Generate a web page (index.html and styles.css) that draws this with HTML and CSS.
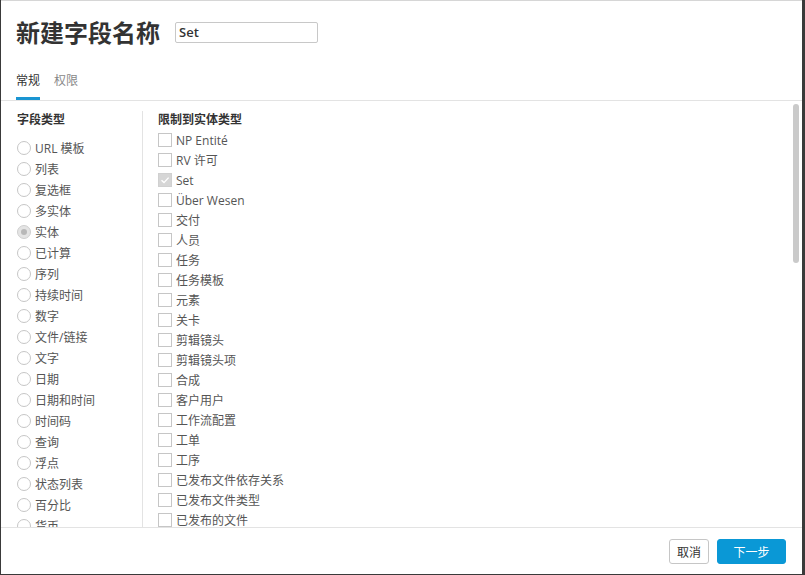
FILE: index.html
```html
<!DOCTYPE html>
<html lang="zh">
<head>
<meta charset="utf-8">
<link rel="stylesheet" href="styles.css">
</head>
<body>
<div class="dialog">
  <div class="header">
    <div class="title-row">
      <h1 class="title">新建字段名称</h1>
      <input class="name-input" type="text" value="Set">
    </div>
    <div class="tabs">
      <div class="tab active">常规</div>
      <div class="tab">权限</div>
    </div>
  </div>
  <div class="body">
    <div class="columns">
      <div class="col-left">
        <div class="heading heading-left">字段类型</div>
        <ul class="list radios">
          <li class="row"><span class="radio"></span>URL 模板</li>
          <li class="row"><span class="radio"></span>列表</li>
          <li class="row"><span class="radio"></span>复选框</li>
          <li class="row"><span class="radio"></span>多实体</li>
          <li class="row"><span class="radio checked"></span>实体</li>
          <li class="row"><span class="radio"></span>已计算</li>
          <li class="row"><span class="radio"></span>序列</li>
          <li class="row"><span class="radio"></span>持续时间</li>
          <li class="row"><span class="radio"></span>数字</li>
          <li class="row"><span class="radio"></span>文件/链接</li>
          <li class="row"><span class="radio"></span>文字</li>
          <li class="row"><span class="radio"></span>日期</li>
          <li class="row"><span class="radio"></span>日期和时间</li>
          <li class="row"><span class="radio"></span>时间码</li>
          <li class="row"><span class="radio"></span>查询</li>
          <li class="row"><span class="radio"></span>浮点</li>
          <li class="row"><span class="radio"></span>状态列表</li>
          <li class="row"><span class="radio"></span>百分比</li>
          <li class="row"><span class="radio"></span>货币</li>
        </ul>
      </div>
      <div class="col-right">
        <div class="heading heading-right">限制到实体类型</div>
        <ul class="list checks">
          <li class="crow"><span class="box"></span>NP Entité</li>
          <li class="crow"><span class="box"></span>RV 许可</li>
          <li class="crow"><span class="box checked"><svg viewBox="0 0 12 12" width="12" height="12"><path d="M2.5 6.2 L5 8.6 L9.6 3.6" fill="none" stroke="#fff" stroke-width="1.4"/></svg></span>Set</li>
          <li class="crow"><span class="box"></span>Über Wesen</li>
          <li class="crow"><span class="box"></span>交付</li>
          <li class="crow"><span class="box"></span>人员</li>
          <li class="crow"><span class="box"></span>任务</li>
          <li class="crow"><span class="box"></span>任务模板</li>
          <li class="crow"><span class="box"></span>元素</li>
          <li class="crow"><span class="box"></span>关卡</li>
          <li class="crow"><span class="box"></span>剪辑镜头</li>
          <li class="crow"><span class="box"></span>剪辑镜头项</li>
          <li class="crow"><span class="box"></span>合成</li>
          <li class="crow"><span class="box"></span>客户用户</li>
          <li class="crow"><span class="box"></span>工作流配置</li>
          <li class="crow"><span class="box"></span>工单</li>
          <li class="crow"><span class="box"></span>工序</li>
          <li class="crow"><span class="box"></span>已发布文件依存关系</li>
          <li class="crow"><span class="box"></span>已发布文件类型</li>
          <li class="crow"><span class="box"></span>已发布的文件</li>
        </ul>
      </div>
    </div>
    <div class="scrollbar"></div>
  </div>
  <div class="footer">
    <button class="btn btn-cancel">取消</button>
    <button class="btn btn-primary">下一步</button>
  </div>
</div>
</body>
</html>
```

FILE: styles.css
```css
* { box-sizing: border-box; }
html, body { margin: 0; padding: 0; }
body {
  background: #3a3a3a;
  width: 805px;
  height: 575px;
  padding: 0 3px 1px 1px;
  font-family: "Open Sans", "Noto Sans CJK SC", sans-serif;
  overflow: hidden;
}
.dialog {
  width: 801px;
  height: 574px;
  background: #fff;
  border-top: 1px solid #d6d6d6;
  display: flex;
  flex-direction: column;
}
.header {
  padding: 17px 16px 0 15px;
  border-bottom: 1px solid #e3e3e3;
}
.title-row {
  display: flex;
  align-items: center;
  gap: 15px;
  height: 28px;
}
.title {
  margin: 0;
  font-family: "Noto Sans CJK SC", sans-serif;
  font-size: 24px;
  line-height: 28px;
  font-weight: 700;
  color: #333;
}
.name-input {
  width: 143px;
  height: 21px;
  border: 1px solid #c8c8c8;
  border-radius: 2px;
  padding: 0 3px;
  font-family: "Open Sans", sans-serif;
  font-size: 13px;
  font-weight: 600;
  color: #333;
  outline: none;
}
.tabs {
  display: flex;
  gap: 14px;
  margin-top: 25px;
}
.tab {
  font-size: 12px;
  line-height: 20px;
  padding-bottom: 6px;
  border-bottom: 3px solid transparent;
  color: #888;
}
.tab.active {
  color: #333;
  border-bottom-color: #1a95d2;
}
.body {
  position: relative;
  height: 427px;
  overflow: hidden;
  border-bottom: 1px solid #e3e3e3;
}
.columns {
  display: flex;
  height: 100%;
  padding-top: 10px;
}
.col-left {
  width: 141px;
  padding-left: 16px;
}
.col-right {
  flex: 1;
  border-left: 1px solid #e3e3e3;
  padding-left: 15px;
}
.heading {
  font-size: 12px;
  line-height: 18px;
  font-weight: 700;
  color: #333;
}
.heading-left { margin-bottom: 8px; }
.heading-right { margin-bottom: 1px; }
.list {
  list-style: none;
  margin: 0;
  padding: 0;
}
.row, .crow {
  display: flex;
  align-items: center;
  font-size: 12px;
  color: #555;
  white-space: nowrap;
}
.row { height: 21px; }
.crow { height: 20px; }
.radio {
  width: 14px;
  height: 14px;
  border: 1px solid #c6c6c6;
  border-radius: 50%;
  margin-right: 4px;
  display: flex;
  align-items: center;
  justify-content: center;
  background: #fff;
}
.radio.checked {
  background: #e4e4e4;
  border-color: #cfcfcf;
}
.radio.checked::after {
  content: "";
  width: 6px;
  height: 6px;
  border-radius: 50%;
  background: #b8b8b8;
}
.box {
  width: 14px;
  height: 14px;
  border: 1px solid #c6c6c6;
  margin-right: 4px;
  display: flex;
  align-items: center;
  justify-content: center;
  background: #fff;
}
.box.checked {
  background: #d6d6d6;
  border-color: #d0d0d0;
}
.scrollbar {
  position: absolute;
  left: 792px;
  top: 3px;
  width: 6px;
  height: 159px;
  border-radius: 3px;
  background: #cacaca;
}
.footer {
  flex: 1;
  display: flex;
  justify-content: flex-end;
  align-items: flex-start;
  gap: 8px;
  padding: 11px 16px 0 0;
}
.btn {
  height: 25px;
  font-family: "Noto Sans CJK SC", sans-serif;
  font-size: 12px;
  border-radius: 3px;
  padding: 0;
  cursor: pointer;
}
.btn-cancel {
  width: 40px;
  background: #fff;
  color: #333;
  border: 1px solid #c6c6c6;
}
.btn-primary {
  width: 69px;
  background: #0a98d6;
  color: #fff;
  border: 1px solid #0a98d6;
}
```
